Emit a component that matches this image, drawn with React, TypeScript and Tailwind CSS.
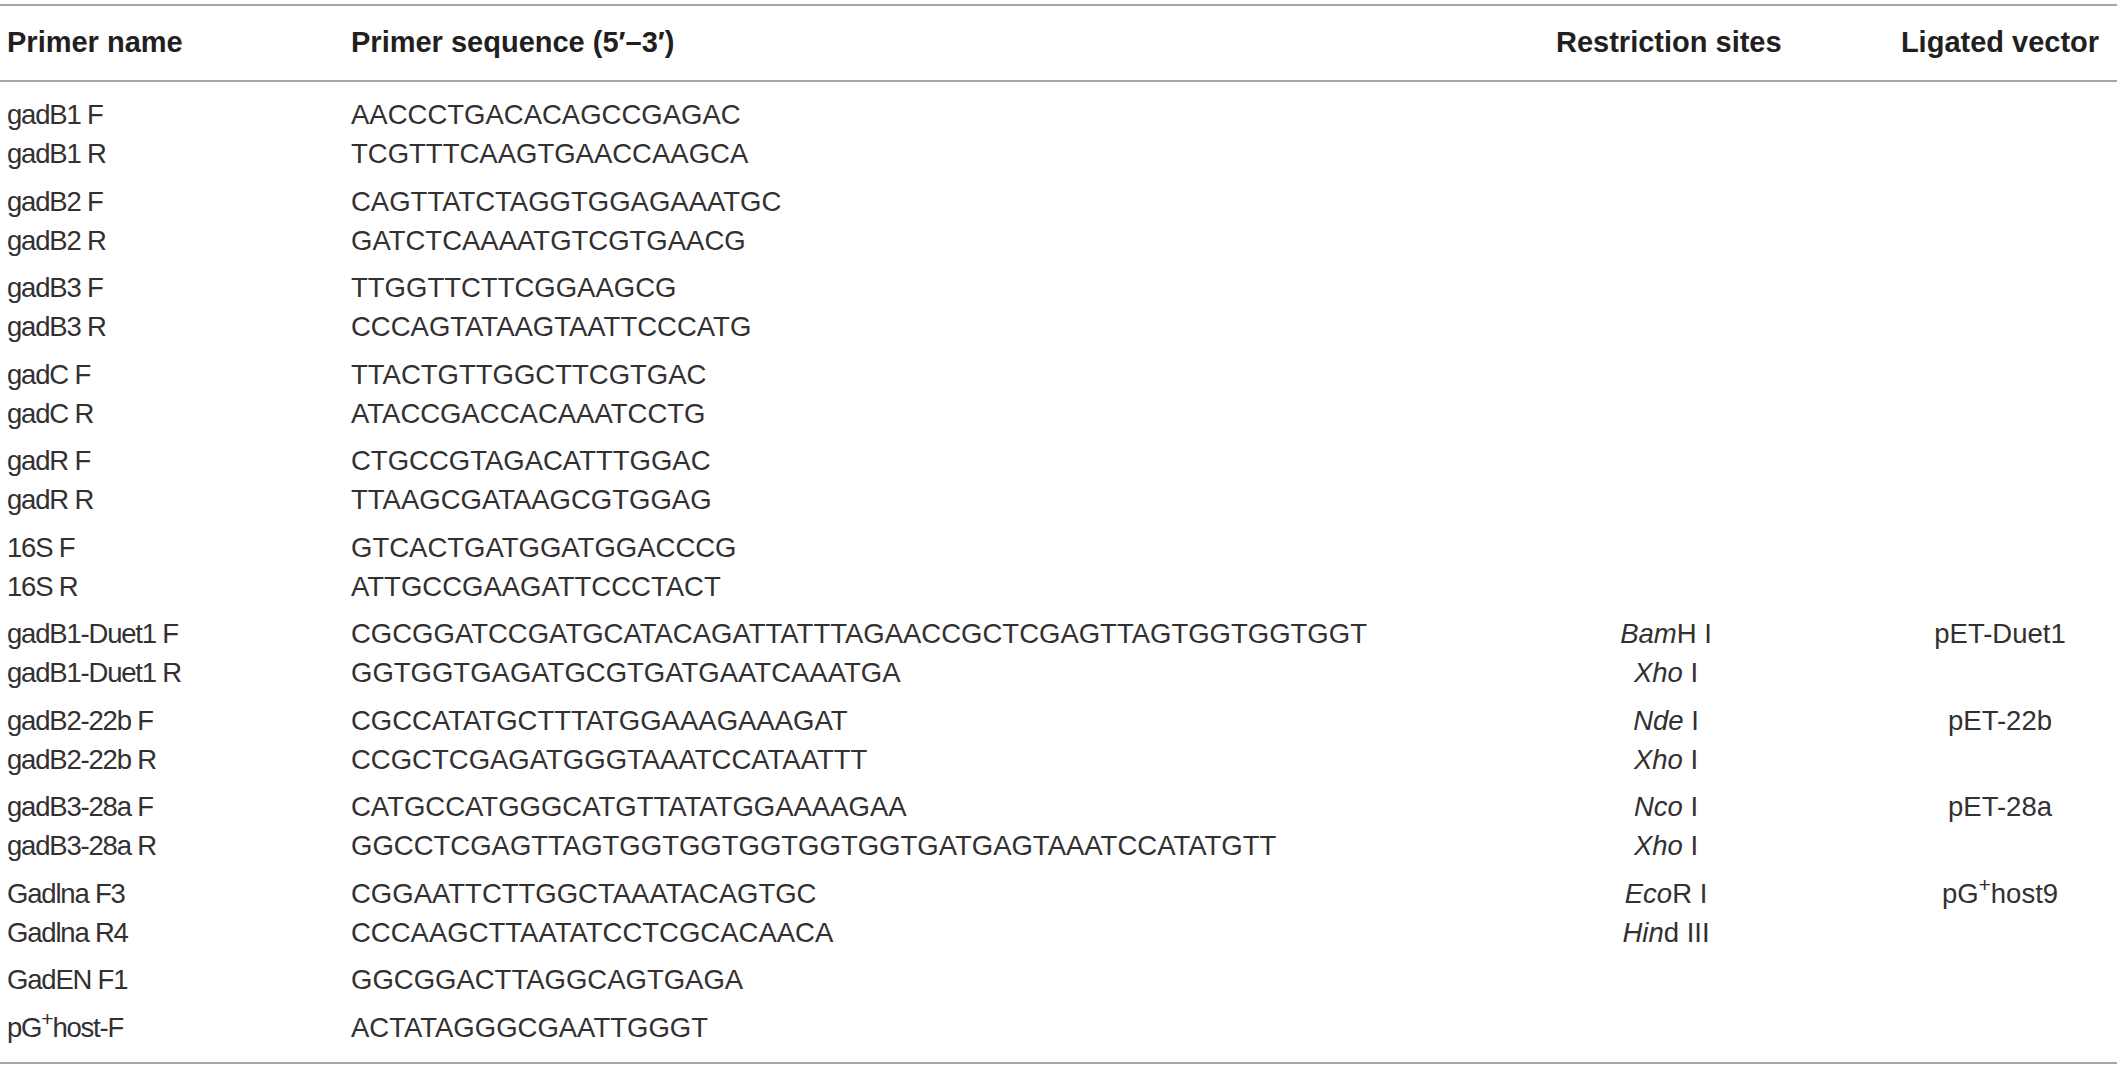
import React from "react";

type Row = {
  name: React.ReactNode;
  seq: string;
  site?: React.ReactNode;
  vector?: React.ReactNode;
};

const Plus = () => (
  <sup className="text-[21px] relative top-[-1px] align-super leading-none">+</sup>
);

const groups: Row[][] = [
  [
    { name: "gadB1 F", seq: "AACCCTGACACAGCCGAGAC" },
    { name: "gadB1 R", seq: "TCGTTTCAAGTGAACCAAGCA" },
  ],
  [
    { name: "gadB2 F", seq: "CAGTTATCTAGGTGGAGAAATGC" },
    { name: "gadB2 R", seq: "GATCTCAAAATGTCGTGAACG" },
  ],
  [
    { name: "gadB3 F", seq: "TTGGTTCTTCGGAAGCG" },
    { name: "gadB3 R", seq: "CCCAGTATAAGTAATTCCCATG" },
  ],
  [
    { name: "gadC F", seq: "TTACTGTTGGCTTCGTGAC" },
    { name: "gadC R", seq: "ATACCGACCACAAATCCTG" },
  ],
  [
    { name: "gadR F", seq: "CTGCCGTAGACATTTGGAC" },
    { name: "gadR R", seq: "TTAAGCGATAAGCGTGGAG" },
  ],
  [
    { name: "16S F", seq: "GTCACTGATGGATGGACCCG" },
    { name: "16S R", seq: "ATTGCCGAAGATTCCCTACT" },
  ],
  [
    {
      name: "gadB1-Duet1 F",
      seq: "CGCGGATCCGATGCATACAGATTATTTAGAACCGCTCGAGTTAGTGGTGGTGGT",
      site: (
        <>
          <i>Bam</i>H I
        </>
      ),
      vector: "pET-Duet1",
    },
    {
      name: "gadB1-Duet1 R",
      seq: "GGTGGTGAGATGCGTGATGAATCAAATGA",
      site: (
        <>
          <i>Xho</i> I
        </>
      ),
    },
  ],
  [
    {
      name: "gadB2-22b F",
      seq: "CGCCATATGCTTTATGGAAAGAAAGAT",
      site: (
        <>
          <i>Nde</i> I
        </>
      ),
      vector: "pET-22b",
    },
    {
      name: "gadB2-22b R",
      seq: "CCGCTCGAGATGGGTAAATCCATAATTT",
      site: (
        <>
          <i>Xho</i> I
        </>
      ),
    },
  ],
  [
    {
      name: "gadB3-28a F",
      seq: "CATGCCATGGGCATGTTATATGGAAAAGAA",
      site: (
        <>
          <i>Nco</i> I
        </>
      ),
      vector: "pET-28a",
    },
    {
      name: "gadB3-28a R",
      seq: "GGCCTCGAGTTAGTGGTGGTGGTGGTGGTGATGAGTAAATCCATATGTT",
      site: (
        <>
          <i>Xho</i> I
        </>
      ),
    },
  ],
  [
    {
      name: "Gadlna F3",
      seq: "CGGAATTCTTGGCTAAATACAGTGC",
      site: (
        <>
          <i>Eco</i>R I
        </>
      ),
      vector: (
        <>
          pG<Plus />host9
        </>
      ),
    },
    {
      name: "Gadlna R4",
      seq: "CCCAAGCTTAATATCCTCGCACAACA",
      site: (
        <>
          <i>Hin</i>d III
        </>
      ),
    },
  ],
  [{ name: "GadEN F1", seq: "GGCGGACTTAGGCAGTGAGA" }],
  [
    {
      name: (
        <>
          pG<Plus />host-F
        </>
      ),
      seq: "ACTATAGGGCGAATTGGGT",
    },
  ],
];

const cols = "grid grid-cols-[344px_1205px_220px_1fr] items-center";

export default function App() {
  return (
    <div className="w-[2117px] h-[1069px] bg-white text-[#333031] font-['Liberation_Sans',Arial,sans-serif] pt-[4px]">
      <div className="border-t-2 border-b-2 border-[#a7a7a7]">
        <div className={`${cols} h-[74px] pl-[7px] font-bold text-[29px] text-[#231f20] whitespace-nowrap`}>
          <div>Primer name</div>
          <div>Primer sequence (5′–3′)</div>
          <div className="text-center">Restriction sites</div>
          <div className="pl-[107px] text-center">Ligated vector</div>
        </div>
      </div>
      <div className="border-b-2 border-[#a7a7a7] pt-[8px] pb-[12px] text-[27.5px] whitespace-nowrap">
        {groups.map((group, gi) => (
          <div key={gi} className="py-[4.25px]">
            {group.map((row, ri) => (
              <div key={ri} className={`${cols} h-[39px] pl-[7px]`}>
                <div className="tracking-[-1.2px]">{row.name}</div>
                <div>{row.seq}</div>
                <div className="text-center">{row.site}</div>
                <div className="pl-[107px] text-center">{row.vector}</div>
              </div>
            ))}
          </div>
        ))}
      </div>
    </div>
  );
}
